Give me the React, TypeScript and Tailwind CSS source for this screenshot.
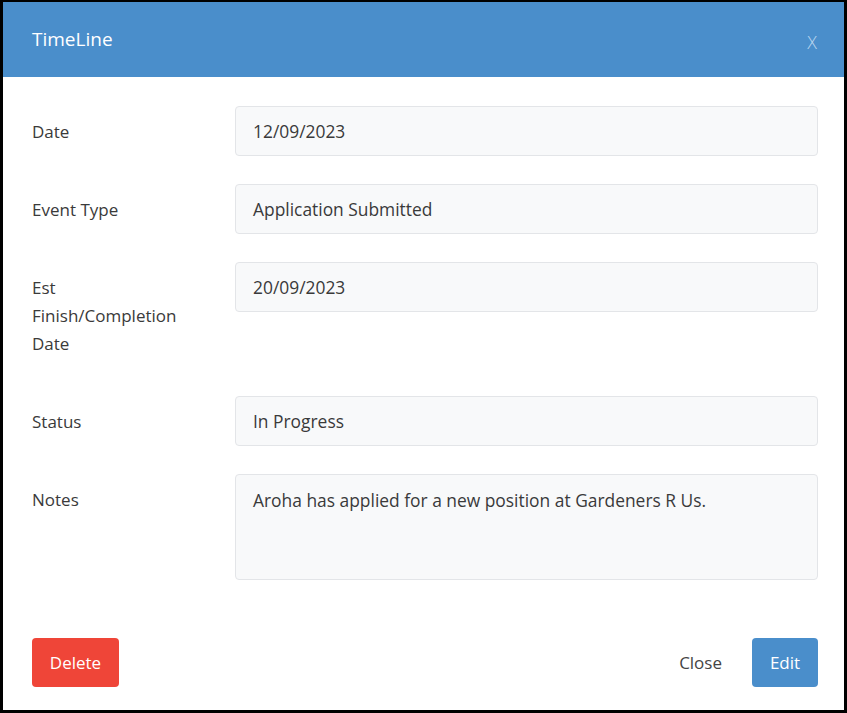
const rows = [
  { label: "Date", value: "12/09/2023" },
  { label: "Event Type", value: "Application Submitted" },
  { label: "Est Finish/Completion Date", value: "20/09/2023" },
  { label: "Status", value: "In Progress" },
];

export default function App() {
  return (
    <div className="h-[713px] w-[847px] bg-black pl-[3px] pr-[3px] pt-[2px] pb-[3px] font-['Open_Sans',sans-serif] text-[#3a3a3a]">
      <div className="flex h-full flex-col bg-white">
        {/* header */}
        <div className="flex h-[75px] shrink-0 items-center justify-between bg-[#4a8ecb] pl-[29px] pr-[27px]">
          <h1 className="text-[19px] text-white">TimeLine</h1>
          <button className="mt-[6px] text-[18px] font-light text-[#b9d5ef]">X</button>
        </div>

        {/* form */}
        <div className="flex flex-col gap-[28px] pl-[29px] pr-[26px] pt-[29px]">
          {rows.map((r) => (
            <div key={r.label} className="flex">
              <div className="w-[203px] shrink-0 pr-[48px] pt-[12px] pb-[10px] text-[17px] leading-[28px]">
                {r.label}
              </div>
              <div className="flex h-[50px] flex-1 items-center rounded-[4px] border border-[#e3e5e8] bg-[#f8f9fa] px-[17px] text-[17.4px]">
                {r.value}
              </div>
            </div>
          ))}
          <div className="flex">
            <div className="w-[203px] shrink-0 pr-[48px] pt-[12px] pb-[10px] text-[17px] leading-[28px]">Notes</div>
            <div className="h-[106px] flex-1 rounded-[4px] border border-[#e3e5e8] bg-[#f8f9fa] px-[17px] pt-[12px] text-[17.4px] leading-[26px]">
              Aroha has applied for a new position at Gardeners R Us.
            </div>
          </div>
        </div>

        {/* footer */}
        <div className="mt-auto flex items-center justify-between pb-[23px] pl-[29px] pr-[26px]">
          <button className="h-[49px] w-[87px] rounded-[4px] bg-[#ef4538] text-[17px] text-white">Delete</button>
          <div className="flex items-center gap-[30px]">
            <button className="text-[17px] text-[#444]">Close</button>
            <button className="h-[49px] w-[66px] rounded-[4px] bg-[#4a8ecb] text-[17px] text-white">Edit</button>
          </div>
        </div>
      </div>
    </div>
  );
}
